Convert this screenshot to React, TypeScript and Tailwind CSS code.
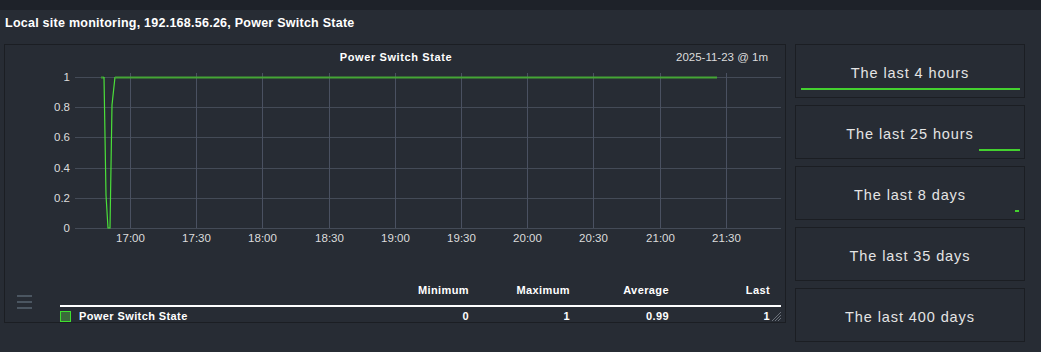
import React from 'react';

const ranges = [
  { label: 'The last 4 hours', bar: 'left-[5px] w-[219px]' },
  { label: 'The last 25 hours', bar: 'left-[183px] w-[41px]' },
  { label: 'The last 8 days', bar: 'left-[219px] w-[4px]' },
  { label: 'The last 35 days', bar: '' },
  { label: 'The last 400 days', bar: '' },
];

const yTicks = [
  { v: '1', y: 32 },
  { v: '0.8', y: 62 },
  { v: '0.6', y: 92 },
  { v: '0.4', y: 123 },
  { v: '0.2', y: 153 },
  { v: '0', y: 183 },
];

const xTicks = ['17:00', '17:30', '18:00', '18:30', '19:00', '19:30', '20:00', '20:30', '21:00', '21:30'];

function Chart() {
  return (
    <svg width="780" height="205" className="block" style={{ fontFamily: '"Liberation Sans", Arial, sans-serif' }}>
      <text x="391" y="16" textAnchor="middle" fill="#ffffff" fontSize="11" fontWeight="bold" letterSpacing="0.6">
        Power Switch State
      </text>
      <text x="763" y="16" textAnchor="end" fill="#dcdcdc" fontSize="11.5">
        2025-11-23 @ 1m
      </text>
      {yTicks.map((t) => (
        <g key={t.v}>
          <line x1="70" x2="776" y1={t.y + 0.5} y2={t.y + 0.5} stroke="#444b57" strokeWidth="1" />
          <text x="65" y={t.y + 4} textAnchor="end" fill="#dcdcdc" fontSize="11.5">
            {t.v}
          </text>
        </g>
      ))}
      {xTicks.map((t, i) => {
        const x = Math.round(125 + 66.2 * i) + 0.5;
        return (
          <g key={t}>
            <line x1={x} x2={x} y1="28" y2="183" stroke="#4a5161" strokeWidth="1" />
            <text x={x} y="197" textAnchor="middle" fill="#dcdcdc" fontSize="11.5">
              {t}
            </text>
          </g>
        );
      })}
      <polyline points="96,32.5 99,32.5" fill="none" stroke="#3d9a33" strokeWidth="2" />
      <polyline points="99,32 101,150 103,183 105,183 107,60 110,32" fill="none" stroke="#4be03a" strokeWidth="1.2" />
      <polyline points="110,32.5 712,32.5" fill="none" stroke="#45a535" strokeWidth="2" />
    </svg>
  );
}

export default function App() {
  return (
    <div
      className="w-[1041px] h-[352px] bg-[#272c34] text-white overflow-hidden"
      style={{ fontFamily: '"Liberation Sans", Arial, sans-serif' }}
    >
      <div className="h-[10px] bg-[#1e2229]" />
      <div className="px-[5px] pt-[4px] h-[34px] text-[12.5px] font-bold tracking-[0.25px]">
        Local site monitoring, 192.168.56.26, Power Switch State
      </div>
      <div className="flex gap-[9px] pl-[4px]">
        {/* chart panel */}
        <div className="relative w-[782px] h-[279px] border border-[#1b1e23] flex flex-col">
          <Chart />
          <div className="mt-auto flex items-end">
            <div className="w-[55px] flex flex-col gap-[4px] pl-[12px] pb-[13px]">
              <span className="block w-[15px] h-[2px] bg-[#4b5661]" />
              <span className="block w-[15px] h-[2px] bg-[#4b5661]" />
              <span className="block w-[15px] h-[2px] bg-[#4b5661]" />
            </div>
            <div className="flex-1 mr-[4px] text-[11px] font-bold tracking-[0.4px] leading-[13px]">
              <div className="grid grid-cols-[1fr_100px_101px_99px_101px] pr-[11px] pb-[8px] text-right">
                <span />
                <span>Minimum</span>
                <span>Maximum</span>
                <span>Average</span>
                <span>Last</span>
              </div>
              <div className="border-t-2 border-white" />
              <div className="grid grid-cols-[1fr_100px_101px_99px_101px] pr-[11px] pt-[3px] h-[15px] text-right">
                <span className="flex items-center gap-[8px] text-left">
                  <span className="w-[11px] h-[11px] border border-[#3fe02f] bg-[#3a6b3a]" />
                  Power Switch State
                </span>
                <span>0</span>
                <span>1</span>
                <span>0.99</span>
                <span>1</span>
              </div>
            </div>
          </div>
          <svg className="absolute right-[4px] bottom-[1px]" width="10" height="10" viewBox="0 0 10 10">
            <path d="M1 10 L10 1 M4 10 L10 4 M7 10 L10 7" stroke="#6b717a" strokeWidth="1" />
          </svg>
        </div>

        {/* range buttons */}
        <div className="flex flex-col gap-[7px]">
          {ranges.map((r) => (
            <div
              key={r.label}
              className="relative w-[230px] h-[54px] border border-[#1b1e23] flex items-center justify-center pt-[6px] text-[14.5px] text-[#e4e4e4] tracking-[0.9px]"
            >
              {r.label}
              {r.bar && <span className={`absolute top-[43px] h-[2px] bg-[#44d12f] ${r.bar}`} />}
            </div>
          ))}
        </div>
      </div>
    </div>
  );
}
